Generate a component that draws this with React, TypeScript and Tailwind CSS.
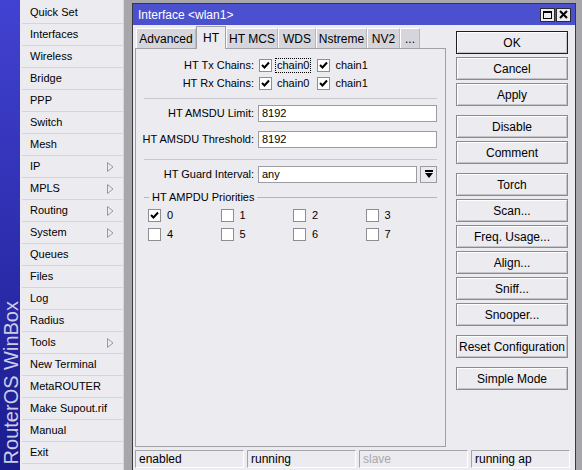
import React from "react";

const menu: { label: string; sub?: boolean }[] = [
  { label: "Quick Set" },
  { label: "Interfaces" },
  { label: "Wireless" },
  { label: "Bridge" },
  { label: "PPP" },
  { label: "Switch" },
  { label: "Mesh" },
  { label: "IP", sub: true },
  { label: "MPLS", sub: true },
  { label: "Routing", sub: true },
  { label: "System", sub: true },
  { label: "Queues" },
  { label: "Files" },
  { label: "Log" },
  { label: "Radius" },
  { label: "Tools", sub: true },
  { label: "New Terminal" },
  { label: "MetaROUTER" },
  { label: "Make Supout.rif" },
  { label: "Manual" },
  { label: "Exit" },
];

const tabs = [
  { label: "Advanced", w: "w-[60px]" },
  { label: "HT", w: "w-[30px]", active: true },
  { label: "HT MCS", w: "w-[52px]" },
  { label: "WDS", w: "w-[38px]" },
  { label: "Nstreme", w: "w-[51px]" },
  { label: "NV2", w: "w-[33px]" },
  { label: "...", w: "w-[20px]" },
];

const buttonGroups = [
  ["OK", "Cancel", "Apply"],
  ["Disable", "Comment"],
  ["Torch", "Scan...", "Freq. Usage...", "Align...", "Sniff...", "Snooper..."],
  ["Reset Configuration"],
  ["Simple Mode"],
];

function SubArrow() {
  return (
    <svg width="7" height="10" viewBox="0 0 7 10" className="mr-[9px]">
      <path d="M0.5 0.5 L6 5 L0.5 9.5 Z" fill="none" stroke="#9a9a9e" strokeWidth="1" />
    </svg>
  );
}

function Check({ checked }: { checked?: boolean }) {
  return (
    <span className="flex h-[13px] w-[13px] shrink-0 items-center justify-center border border-[#8d8d92] bg-white">
      {checked && (
        <svg width="9" height="9" viewBox="0 0 9 9">
          <path d="M1 4 L3.5 6.5 L8 1.5" fill="none" stroke="#000" strokeWidth="2" />
        </svg>
      )}
    </span>
  );
}

function Field({ label, children }: { label: string; children: React.ReactNode }) {
  return (
    <div className="flex items-center">
      <span className="w-[118px] shrink-0 text-right">{label}</span>
      <div className="ml-[4px] flex items-center">{children}</div>
    </div>
  );
}

function Input({ value, w }: { value: string; w: string }) {
  return (
    <div className={`flex h-[17px] items-center border border-[#9c9ca0] bg-white pl-[3px] ${w}`}>{value}</div>
  );
}

export default function App() {
  return (
    <div className="flex h-[470px] w-[582px] overflow-hidden bg-[#a6a6ab] font-['Liberation_Sans',Arial,sans-serif] text-[11px] leading-none text-black">
      {/* sidebar */}
      <div className="flex w-[20px] shrink-0 flex-col justify-end bg-linear-to-b from-[#4242d2] to-[#1b1b8e] pb-[6px]">
        <span className="rotate-180 pr-[1px] text-[20px] leading-[20px] text-[#cdcde6] [writing-mode:vertical-rl]">
          RouterOS WinBox
        </span>
      </div>
      <ul className="w-[103px] shrink-0 bg-[#ecebf0] pt-[2px]">
        {menu.map((m) => (
          <li
            key={m.label}
            className="ml-[2px] flex h-[22px] items-center justify-between border-b border-[#d5d4da] pl-[8px]"
          >
            <span>{m.label}</span>
            {m.sub && <SubArrow />}
          </li>
        ))}
      </ul>
      <div className="w-[9px] shrink-0 border-l border-[#d8d8dc] bg-[#a6a6ab]" />

      {/* window */}
      <div className="mt-[3px] flex w-[444px] shrink-0 flex-col border border-b-0 border-[#3a3a3e] bg-[#ecebf0]">
        <div className="flex h-[21px] shrink-0 items-center justify-between bg-[#4b50cf] pl-[5px] pr-[4px]">
          <span className="text-[12px] text-white">Interface &lt;wlan1&gt;</span>
          <div className="flex gap-[1px]">
            <span className="flex h-[14px] w-[15px] items-center justify-center border border-[#2c2c30] bg-[#ecebf0]">
              <span className="h-[8px] w-[9px] border border-black border-t-2" />
            </span>
            <span className="flex h-[14px] w-[15px] items-center justify-center border border-[#2c2c30] bg-[#ecebf0]">
              <svg width="9" height="9" viewBox="0 0 9 9">
                <path d="M1 1 L8 8 M8 1 L1 8" stroke="#000" strokeWidth="2" />
              </svg>
            </span>
          </div>
        </div>

        <div className="flex">
          {/* left column */}
          <div className="w-[313px] shrink-0 pl-[2px]">
            <div className="mt-[1px] flex h-[22px] items-end pl-[1px]">
              {tabs.map((t) =>
                t.active ? (
                  <div
                    key={t.label}
                    className={`relative -mb-[1px] flex h-[23px] items-center justify-center border border-b-0 border-[#a0a0a5] bg-[#ecebf0] text-[12px] ${t.w}`}
                  >
                    {t.label}
                  </div>
                ) : (
                  <div
                    key={t.label}
                    className={`flex h-[20px] items-center justify-center border border-b-0 border-l-white border-r-[#b8b8bc] border-t-white bg-[#d6d5db] text-[12px] ${t.w}`}
                  >
                    {t.label}
                  </div>
                )
              )}
            </div>
            <div className="h-[399px] w-[311px] border border-[#a0a0a5] pt-[7px]">
              <div className="flex h-[18px] items-center">
                <span className="w-[118px] shrink-0 text-right">HT Tx Chains:</span>
                <div className="ml-[5px] flex items-center">
                  <Check checked />
                  <span className="ml-[3px] border border-dotted border-black px-[1px] py-[1px]">chain0</span>
                  <span className="ml-[6px]">
                    <Check checked />
                  </span>
                  <span className="ml-[5px]">chain1</span>
                </div>
              </div>
              <div className="flex h-[18px] items-center">
                <span className="w-[118px] shrink-0 text-right">HT Rx Chains:</span>
                <div className="ml-[5px] flex items-center">
                  <Check checked />
                  <span className="ml-[3px] border border-transparent px-[1px] py-[1px]">chain0</span>
                  <span className="ml-[6px]">
                    <Check checked />
                  </span>
                  <span className="ml-[5px]">chain1</span>
                </div>
              </div>

              <div className="ml-[8px] mr-[8px] mt-[6px] h-px bg-[#c9c8ce]" />

              <div className="mt-[6px]">
                <Field label="HT AMSDU Limit:">
                  <Input value="8192" w="w-[179px]" />
                </Field>
              </div>
              <div className="mt-[9px]">
                <Field label="HT AMSDU Threshold:">
                  <Input value="8192" w="w-[179px]" />
                </Field>
              </div>

              <div className="ml-[8px] mr-[8px] mt-[11px] h-px bg-[#c9c8ce]" />

              <div className="mt-[6px]">
                <Field label="HT Guard Interval:">
                  <Input value="any" w="w-[159px]" />
                  <div className="ml-[3px] flex h-[17px] w-[17px] items-center justify-center border border-[#9c9ca0] bg-[#ecebf0]">
                    <svg width="8" height="9" viewBox="0 0 8 9">
                      <path d="M0 1 H8" stroke="#000" strokeWidth="2" />
                      <path d="M0 3 H8 L4 8 Z" fill="#000" />
                    </svg>
                  </div>
                </Field>
              </div>

              <div className="ml-[8px] mr-[8px] mt-[7px] flex h-[14px] items-center">
                <span className="h-px w-[5px] bg-[#b4b4b9]" />
                <span className="px-[3px]">HT AMPDU Priorities</span>
                <span className="h-px flex-1 bg-[#b4b4b9]" />
              </div>

              <div className="mt-[5px] grid w-[302px] grid-cols-4 gap-y-[6px] pl-[12px]">
                {[0, 1, 2, 3, 4, 5, 6, 7].map((n) => (
                  <div key={n} className="flex h-[13px] items-center">
                    <Check checked={n === 0} />
                    <span className="ml-[6px]">{n}</span>
                  </div>
                ))}
              </div>
            </div>
          </div>

          {/* buttons */}
          <div className="ml-[10px] flex w-[112px] shrink-0 flex-col gap-[9px] pt-[6px]">
            {buttonGroups.map((g, i) => (
              <div key={i} className="flex flex-col gap-[3px]">
                {g.map((b) => (
                  <button
                    key={b}
                    className={`flex h-[23px] w-[112px] items-center justify-center border bg-[#ecebf0] text-[12px] shadow-[inset_1px_1px_0_#ffffff,inset_-1px_-1px_0_#c4c4c9] ${
                      b === "OK" ? "border-[#1e1e22]" : "border-[#8a8a8f]"
                    }`}
                  >
                    {b}
                  </button>
                ))}
              </div>
            ))}
          </div>
        </div>

        {/* status bar */}
        <div className="mt-[3px] flex gap-[3px] pl-[2px]">
          {[
            { t: "enabled", w: "w-[109px]" },
            { t: "running", w: "w-[109px]" },
            { t: "slave", w: "w-[109px]", dim: true },
            { t: "running ap", w: "w-[99px]" },
          ].map((c) => (
            <div
              key={c.t}
              className={`flex h-[18px] items-center border border-b-white border-l-[#a4a4a9] border-r-white border-t-[#a4a4a9] pl-[3px] text-[12px] ${c.w} ${
                c.dim ? "text-[#a8a8ac]" : ""
              }`}
            >
              {c.t}
            </div>
          ))}
        </div>
      </div>
    </div>
  );
}
